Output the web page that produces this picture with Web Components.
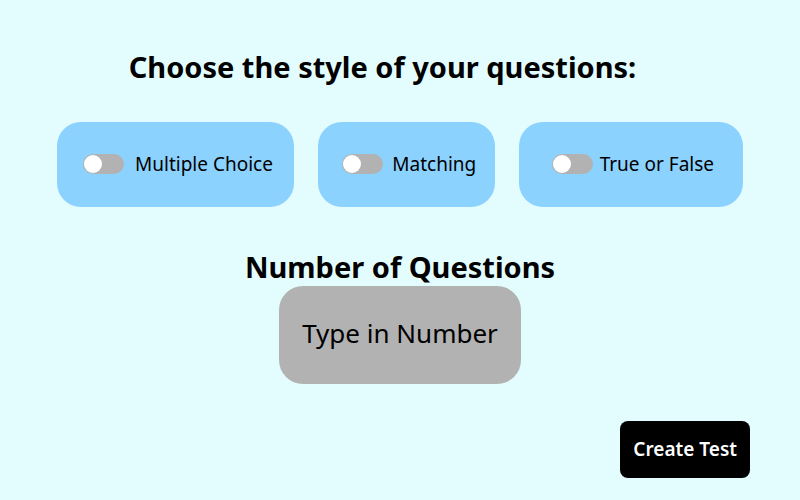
<!DOCTYPE html>
<html lang="en">
<head>
<meta charset="utf-8">
<meta name="viewport" content="width=device-width, initial-scale=1">
<title>Create Test</title>
<style>
  body { margin: 0; background: #e3fdff; color: #000; font-family: "Noto Sans", "Open Sans", sans-serif; }
</style>
</head>
<body>
<test-builder></test-builder>

<template id="test-builder-template">
  <style>
    :host { display: block; }
    form { box-sizing: border-box; min-height: 100vh; display: flex; flex-direction: column; padding: 47px 50px 22px; }
    .styles { display: grid; grid-template-columns: 237fr 176fr 224fr; gap: 24px; margin: 35px 7px 41px; }
    .title { padding-right: 35px; }
    style-option:nth-child(1) { --inset: 26px; --gap: 11px; }
    style-option:nth-child(2) { --inset: 24px; --gap: 9px; }
    style-option:nth-child(3) { --inset: 33px; --gap: 7px; }
    action-button { align-self: flex-end; margin-top: auto; }
  </style>
  <form>
    <section-title class="title">Choose the style of your questions:</section-title>
    <div class="styles">
      <style-option>Multiple Choice</style-option>
      <style-option>Matching</style-option>
      <style-option>True or False</style-option>
    </div>
    <number-field label="Number of Questions" placeholder="Type in Number"></number-field>
    <action-button>Create Test</action-button>
  </form>
</template>

<template id="section-title-template">
  <style>
    :host { display: block; text-align: center; }
    h2 { margin: 0; font-size: 29px; line-height: 40px; font-weight: 700; }
  </style>
  <h2><slot></slot></h2>
</template>

<template id="style-option-template">
  <style>
    :host { display: block; }
    label { box-sizing: border-box; display: flex; align-items: center; gap: var(--gap, 10px); min-height: 85px; padding-left: var(--inset, 24px); padding-bottom: 2px; border-radius: 24px; background: #8cd2ff; font-size: 19px; line-height: 24px; cursor: pointer; white-space: nowrap; }
    input { appearance: none; flex: none; box-sizing: border-box; width: 41px; height: 20px; margin: 0; padding: 1px; border-radius: 10px; background: #b2b2b2; display: flex; cursor: pointer; }
    input::before { content: ""; width: 18px; height: 18px; border-radius: 50%; background: #fff; }
    input:checked { justify-content: flex-end; background: #1479c9; }
  </style>
  <label><input type="checkbox" role="switch"><span><slot></slot></span></label>
</template>

<template id="number-field-template">
  <style>
    :host { display: flex; flex-direction: column; align-items: center; }
    label { font-size: 29px; line-height: 38px; font-weight: 700; }
    input { box-sizing: border-box; width: 242px; max-width: 100%; height: 98px; margin: 0; padding: 0 12px 4px; border: 0; border-radius: 24px; background: #b2b2b2; color: #000; font: 26px/36px "Noto Sans", "Open Sans", sans-serif; text-align: center; }
    input::placeholder { color: #000; opacity: 1; }
  </style>
  <label for="count"></label>
  <input id="count" type="text" inputmode="numeric">
</template>

<template id="action-button-template">
  <style>
    :host { display: block; }
    button { margin: 0; padding: 16px 13px; border: 0; border-radius: 8px; background: #000; color: #fff; font: 600 19px/25px "Noto Sans", "Open Sans", sans-serif; cursor: pointer; }
  </style>
  <button type="button"><slot></slot></button>
</template>

<script>
  class TemplateElement extends HTMLElement {
    constructor() {
      super();
      const template = document.getElementById(this.localName + "-template");
      this.attachShadow({ mode: "open" }).append(template.content.cloneNode(true));
    }
  }
  class SectionTitle extends TemplateElement {}
  class StyleOption extends TemplateElement {}
  class ActionButton extends TemplateElement {}
  class NumberField extends TemplateElement {
    connectedCallback() {
      this.shadowRoot.querySelector("label").textContent = this.getAttribute("label");
      this.shadowRoot.querySelector("input").placeholder = this.getAttribute("placeholder");
    }
  }
  class TestBuilder extends TemplateElement {}
  customElements.define("section-title", SectionTitle);
  customElements.define("style-option", StyleOption);
  customElements.define("action-button", ActionButton);
  customElements.define("number-field", NumberField);
  customElements.define("test-builder", TestBuilder);
</script>
</body>
</html>
